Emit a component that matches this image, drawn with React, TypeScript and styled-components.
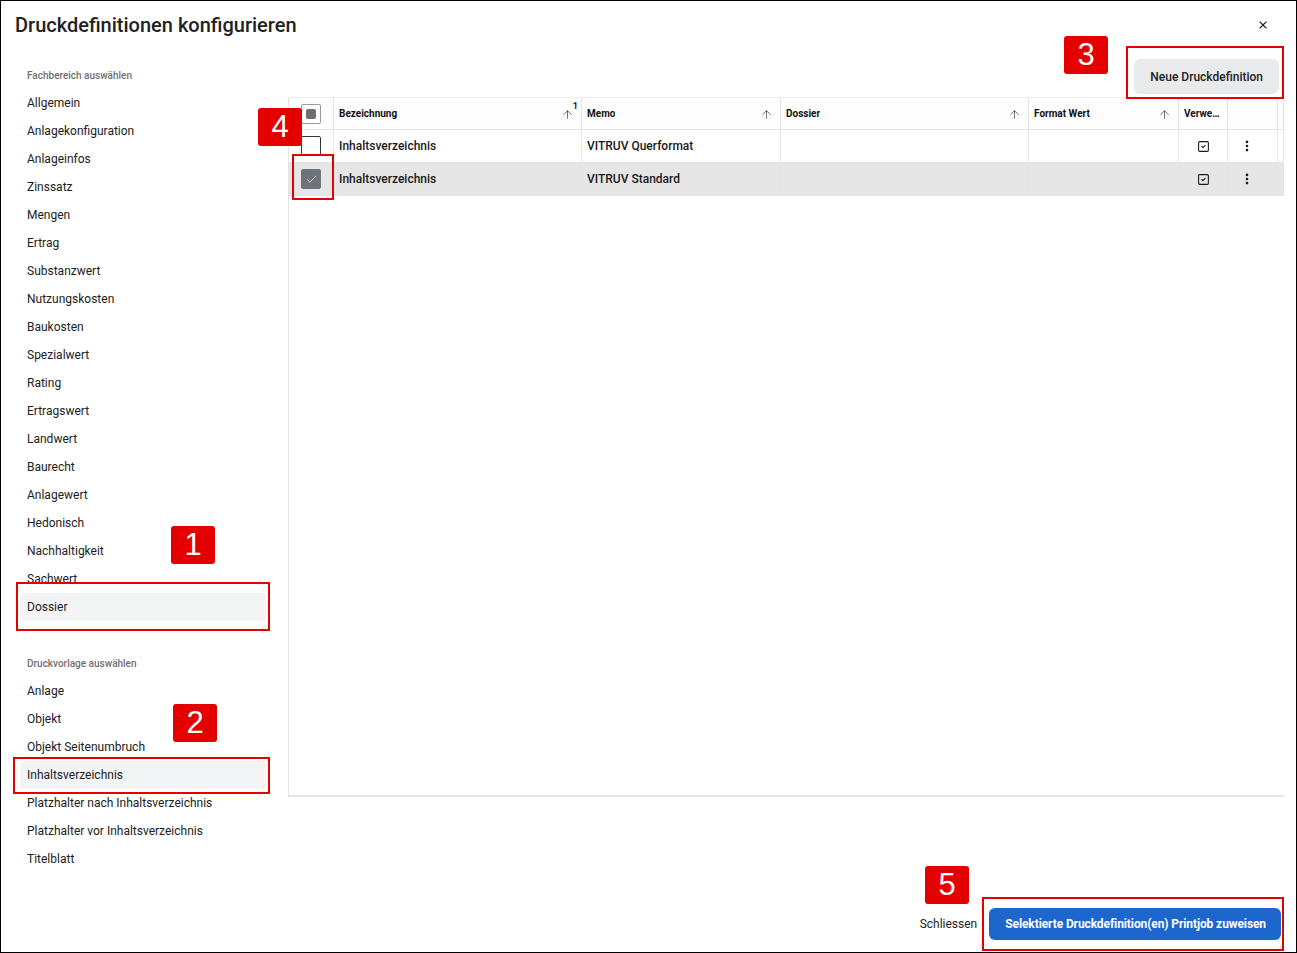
import React from 'react';
import styled, { createGlobalStyle } from 'styled-components';
import { ArrowUp, EllipsisVertical, SquareCheck, X, Check } from 'lucide-react';

const GlobalStyle = createGlobalStyle`
  html, body {
    margin: 0;
    padding: 0;
    background: #ffffff;
  }
  * {
    box-sizing: border-box;
  }
`;

const colors = {
  text: '#212121',
  muted: '#707070',
  line: '#e4e4e4',
  selected: '#f3f4f6',
  rowSelected: '#e6e6e6',
  primary: '#1d66cc',
  red: '#e50000',
};

const Frame = styled.div`
  position: relative;
  width: 1297px;
  height: 953px;
  border: 1px solid #000;
  display: flex;
  flex-direction: column;
  font-family: Roboto, 'Liberation Sans', sans-serif;
  color: ${colors.text};
  overflow: hidden;
`;

const Header = styled.header`
  height: 48px;
  padding: 0 21px 0 14px;
  display: flex;
  align-items: center;
  justify-content: space-between;
`;

const Title = styled.h1`
  margin: 0;
  font-size: 20px;
  font-weight: 500;
  color: #222;
`;

const CloseButton = styled.button`
  width: 24px;
  height: 24px;
  display: flex;
  align-items: center;
  justify-content: center;
  border: none;
  background: transparent;
  color: #222;
  padding: 0;
`;

const Body = styled.div`
  flex: 1;
  display: flex;
`;

const Sidebar = styled.nav`
  flex: 0 0 287px;
  padding: 16px 22px 0 19px;
  display: flex;
  flex-direction: column;
`;

const SectionLabel = styled.div<{ $first?: boolean }>`
  height: 20px;
  display: flex;
  align-items: center;
  padding-left: 7px;
  margin: ${(p) => (p.$first ? '0 0 4px' : '32px 0 4px')};
  font-size: 10px;
  font-weight: 500;
  color: ${colors.muted};
`;

const NavItem = styled.div<{ $active?: boolean }>`
  height: 28px;
  display: flex;
  align-items: center;
  padding-left: 7px;
  font-size: 12px;
  color: ${colors.text};
  border-radius: 4px;
  background: ${(p) => (p.$active ? colors.selected : 'transparent')};
`;

const Main = styled.main`
  flex: 1;
  min-width: 0;
  display: flex;
  flex-direction: column;
  padding: 10px 12px 12px 0;
`;

const Toolbar = styled.div`
  display: flex;
  justify-content: flex-end;
  padding-right: 5px;
  margin-bottom: 3px;
`;

const SecondaryButton = styled.button`
  height: 35px;
  padding: 0 16px;
  border: none;
  border-radius: 6px;
  background: #e9eaec;
  font-family: inherit;
  font-size: 12px;
  font-weight: 500;
  color: #222;
`;

const TableBox = styled.div`
  height: 700px;
  border-left: 1px solid ${colors.line};
  border-bottom: 2px solid ${colors.line};
`;

const Row = styled.div<{ $head?: boolean; $selected?: boolean }>`
  display: grid;
  grid-template-columns: 45px 248px 199px 248px 150px 49px 50px minmax(0, 1fr);
  height: 33px;
  border-bottom: 1px solid ${colors.line};
  border-top: ${(p) => (p.$head ? `1px solid #eeeeee` : 'none')};
  background: ${(p) => (p.$selected ? colors.rowSelected : p.$head ? '#fdfdfd' : '#fff')};
`;

const Cell = styled.div<{ $center?: boolean }>`
  display: flex;
  align-items: center;
  justify-content: ${(p) => (p.$center ? 'center' : 'flex-start')};
  padding: 0 ${(p) => (p.$center ? '0' : '5px')};
  border-right: 1px solid ${colors.line};
  font-size: 12px;
  font-weight: 500;
  color: #1a1a1a;
  min-width: 0;
`;

const ActionCell = styled(Cell)`
  padding-left: 12px;
`;

const EmptyCell = styled.div`
  border-right: 1px solid ${colors.line};
  min-width: 0;
`;

const HeadCell = styled(Cell)`
  justify-content: ${(p) => (p.$center ? 'center' : 'space-between')};
  padding-right: ${(p) => (p.$center ? '0' : '7px')};
  font-size: 10px;
  font-weight: 700;
  color: #111;
`;

const HeadText = styled.span`
  overflow: hidden;
  white-space: nowrap;
  text-overflow: ellipsis;
`;

const SortIcon = styled.span`
  position: relative;
  display: flex;
  color: #444;
  margin-top: 2px;
`;

const SortIndex = styled.span`
  position: absolute;
  top: -7px;
  right: -4px;
  font-size: 9px;
  font-weight: 700;
  color: #222;
`;

const Checkbox = styled.span<{ $state: 'none' | 'checked' | 'mixed' }>`
  width: 20px;
  height: 20px;
  border-radius: 2px;
  display: flex;
  align-items: center;
  justify-content: center;
  border: 1px solid
    ${(p) => (p.$state === 'mixed' ? '#9a9a9a' : p.$state === 'checked' ? '#6e737b' : '#333')};
  background: ${(p) => (p.$state === 'checked' ? '#6e737b' : '#fff')};
  color: #fff;
`;

const MixedMark = styled.span`
  width: 10px;
  height: 10px;
  border-radius: 2px;
  background: #6b6f76;
`;

const Footer = styled.footer`
  margin-top: auto;
  display: flex;
  justify-content: flex-end;
  align-items: center;
  gap: 12px;
  padding-right: 3px;
`;

const TextButton = styled.button`
  border: none;
  background: transparent;
  padding: 0;
  font-family: inherit;
  font-size: 12px;
  color: #222;
`;

const PrimaryButton = styled.button`
  height: 32px;
  padding: 0 15px 0 16px;
  border: none;
  border-radius: 6px;
  background: ${colors.primary};
  color: #fff;
  font-family: inherit;
  font-size: 12px;
  font-weight: 700;
  letter-spacing: -0.1px;
`;

const MarkBox = styled.div<{ $x: number; $y: number; $w: number; $h: number }>`
  position: absolute;
  left: ${(p) => p.$x - 1}px;
  top: ${(p) => p.$y - 1}px;
  width: ${(p) => p.$w}px;
  height: ${(p) => p.$h}px;
  border: 2px solid ${colors.red};
  pointer-events: none;
`;

const Badge = styled.div<{ $x: number; $y: number }>`
  position: absolute;
  left: ${(p) => p.$x - 1}px;
  top: ${(p) => p.$y - 1}px;
  width: 44px;
  height: 38px;
  border-radius: 3px;
  background: ${colors.red};
  color: #fff;
  display: flex;
  align-items: center;
  justify-content: center;
  font-family: 'Liberation Sans', Arial, sans-serif;
  font-size: 31px;
`;

const fachbereiche = [
  'Allgemein',
  'Anlagekonfiguration',
  'Anlageinfos',
  'Zinssatz',
  'Mengen',
  'Ertrag',
  'Substanzwert',
  'Nutzungskosten',
  'Baukosten',
  'Spezialwert',
  'Rating',
  'Ertragswert',
  'Landwert',
  'Baurecht',
  'Anlagewert',
  'Hedonisch',
  'Nachhaltigkeit',
  'Sachwert',
  'Dossier',
];

const vorlagen = [
  'Anlage',
  'Objekt',
  'Objekt Seitenumbruch',
  'Inhaltsverzeichnis',
  'Platzhalter nach Inhaltsverzeichnis',
  'Platzhalter vor Inhaltsverzeichnis',
  'Titelblatt',
];

const rows = [
  { name: 'Inhaltsverzeichnis', memo: 'VITRUV Querformat', selected: false },
  { name: 'Inhaltsverzeichnis', memo: 'VITRUV Standard', selected: true },
];

// annotation overlays: [x, y, width, height] in page pixels
const marks = [
  { n: 1, box: [16, 582, 254, 49], badge: [171, 526] },
  { n: 2, box: [13, 757, 257, 37], badge: [173, 704] },
  { n: 3, box: [1126, 46, 158, 53], badge: [1064, 36] },
  { n: 4, box: [292, 154, 42, 46], badge: [258, 108] },
  { n: 5, box: [982, 897, 302, 54], badge: [925, 866] },
];

const Sort: React.FC<{ index?: number }> = ({ index }) => (
  <SortIcon>
    <ArrowUp size={13} strokeWidth={1.4} />
    {index && <SortIndex>{index}</SortIndex>}
  </SortIcon>
);

export default function App() {
  return (
    <>
      <GlobalStyle />
      <Frame>
        <Header>
          <Title>Druckdefinitionen konfigurieren</Title>
          <CloseButton aria-label="Schliessen">
            <X size={12} strokeWidth={2.2} />
          </CloseButton>
        </Header>
        <Body>
          <Sidebar>
            <SectionLabel $first>Fachbereich auswählen</SectionLabel>
            {fachbereiche.map((f) => (
              <NavItem key={f} $active={f === 'Dossier'}>
                {f}
              </NavItem>
            ))}
            <SectionLabel>Druckvorlage auswählen</SectionLabel>
            {vorlagen.map((v) => (
              <NavItem key={v} $active={v === 'Inhaltsverzeichnis'}>
                {v}
              </NavItem>
            ))}
          </Sidebar>
          <Main>
            <Toolbar>
              <SecondaryButton>Neue Druckdefinition</SecondaryButton>
            </Toolbar>
            <TableBox>
              <Row $head>
                <HeadCell $center>
                  <Checkbox $state="mixed">
                    <MixedMark />
                  </Checkbox>
                </HeadCell>
                <HeadCell>
                  <HeadText>Bezeichnung</HeadText>
                  <Sort index={1} />
                </HeadCell>
                <HeadCell>
                  <HeadText>Memo</HeadText>
                  <Sort />
                </HeadCell>
                <HeadCell>
                  <HeadText>Dossier</HeadText>
                  <Sort />
                </HeadCell>
                <HeadCell>
                  <HeadText>Format Wert</HeadText>
                  <Sort />
                </HeadCell>
                <HeadCell>
                  <HeadText>Verwendet</HeadText>
                </HeadCell>
                <EmptyCell />
                <EmptyCell />
              </Row>
              {rows.map((r) => (
                <Row key={r.memo} $selected={r.selected}>
                  <Cell $center>
                    <Checkbox $state={r.selected ? 'checked' : 'none'}>
                      {r.selected && <Check size={13} strokeWidth={1.3} />}
                    </Checkbox>
                  </Cell>
                  <Cell>{r.name}</Cell>
                  <Cell>{r.memo}</Cell>
                  <EmptyCell />
                  <EmptyCell />
                  <Cell $center>
                    <SquareCheck size={13} strokeWidth={2} />
                  </Cell>
                  <ActionCell>
                    <EllipsisVertical size={14} strokeWidth={2.6} />
                  </ActionCell>
                  <EmptyCell />
                </Row>
              ))}
            </TableBox>
            <Footer>
              <TextButton>Schliessen</TextButton>
              <PrimaryButton>Selektierte Druckdefinition(en) Printjob zuweisen</PrimaryButton>
            </Footer>
          </Main>
        </Body>
        {marks.map((m) => (
          <React.Fragment key={m.n}>
            <MarkBox $x={m.box[0]} $y={m.box[1]} $w={m.box[2]} $h={m.box[3]} />
            <Badge $x={m.badge[0]} $y={m.badge[1]}>
              {m.n}
            </Badge>
          </React.Fragment>
        ))}
      </Frame>
    </>
  );
}
